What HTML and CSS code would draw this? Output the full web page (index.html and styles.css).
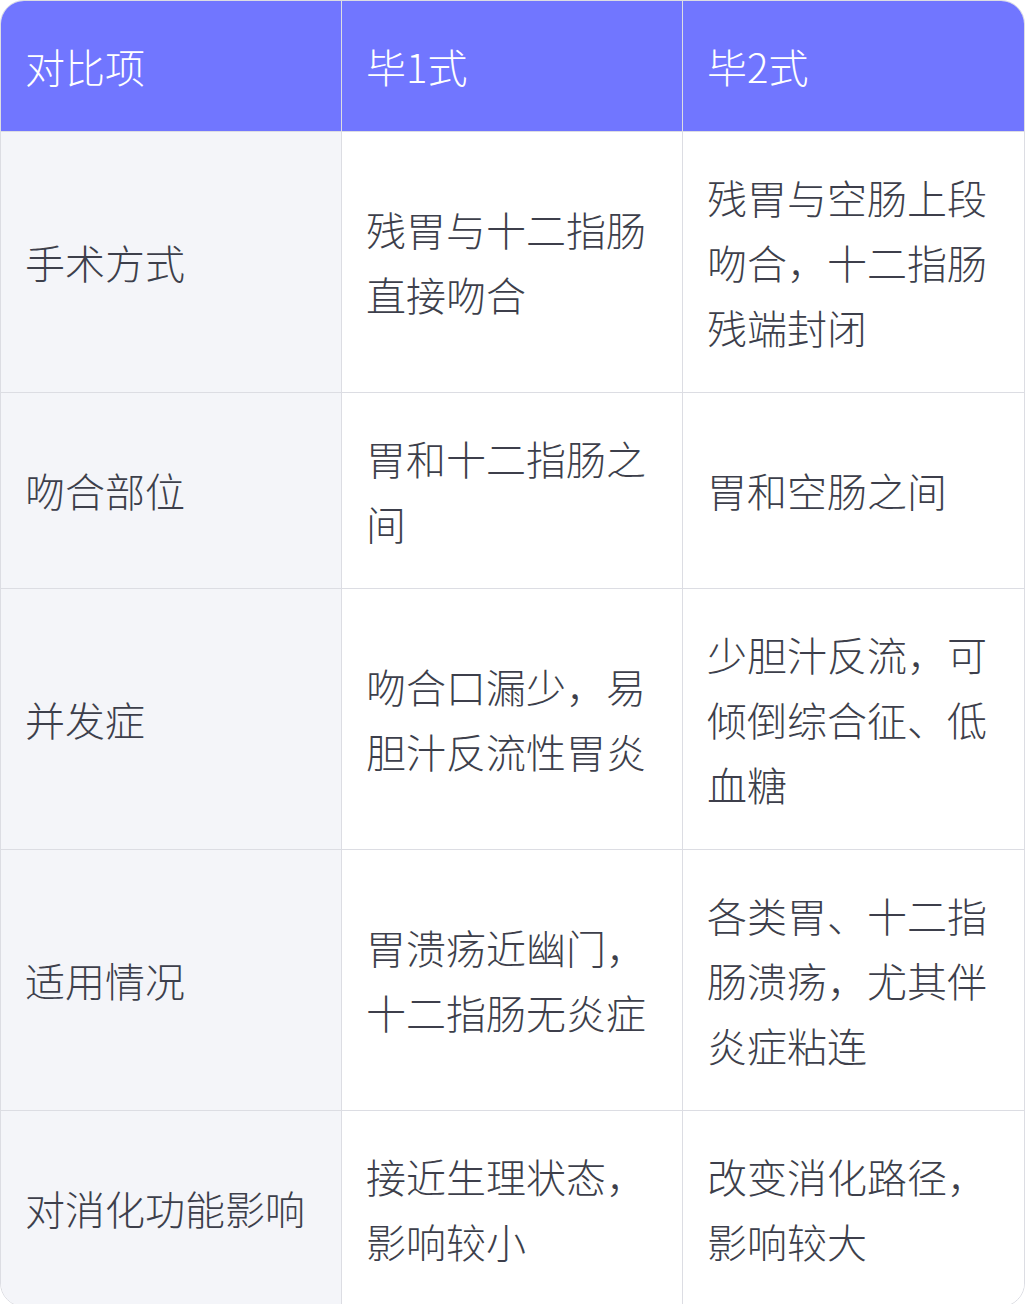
FILE: index.html
```html
<!DOCTYPE html>
<html lang="zh">
<head>
<meta charset="utf-8">
<link rel="stylesheet" href="styles.css">
</head>
<body>
<div class="wrap">
<table class="cmp">
  <colgroup><col class="c1"><col class="c2"><col class="c3"></colgroup>
  <thead>
    <tr><th>对比项</th><th>毕1式</th><th>毕2式</th></tr>
  </thead>
  <tbody>
    <tr><td>手术方式</td><td>残胃与十二指肠直接吻合</td><td>残胃与空肠上段吻合，十二指肠残端封闭</td></tr>
    <tr><td>吻合部位</td><td>胃和十二指肠之间</td><td>胃和空肠之间</td></tr>
    <tr><td>并发症</td><td>吻合口漏少，易胆汁反流性胃炎</td><td>少胆汁反流，可倾倒综合征、低血糖</td></tr>
    <tr><td>适用情况</td><td>胃溃疡近幽门，十二指肠无炎症</td><td>各类胃、十二指肠溃疡，尤其伴炎症粘连</td></tr>
    <tr><td>对消化功能影响</td><td>接近生理状态，影响较小</td><td>改变消化路径，影响较大</td></tr>
  </tbody>
</table>
</div>
</body>
</html>
```
FILE: styles.css
```css
html, body { margin: 0; padding: 0; background: #ffffff; }
.wrap { width: 1025px; }
.cmp {
  width: 1025px;
  border-collapse: separate;
  border-spacing: 0;
  table-layout: fixed;
  border: 1px solid #dcdde3;
  border-radius: 24px;
  overflow: hidden;
  font-family: "Noto Sans CJK SC", sans-serif;
  font-weight: 300;
  font-size: 40px;
  line-height: 65px;
  color: #3d3f4b;
}
.c1 { width: 341px; }
.c2 { width: 341px; }
.c3 { width: 341px; }
.cmp th, .cmp td {
  padding: 32.5px 26px 32.5px 24px;
  text-align: left;
  vertical-align: middle;
  border-right: 1px solid #dcdde3;
  border-bottom: 1px solid #dcdde3;
  word-break: break-all;
}
.cmp th:last-child, .cmp td:last-child { border-right: none; }
.cmp tbody tr:last-child td { border-bottom: none; }
.cmp th {
  background: #7176ff;
  color: #ffffff;
  font-weight: 300;
}
.cmp td { background: #ffffff; }
.cmp td:first-child { background: #f4f5f9; }
```
